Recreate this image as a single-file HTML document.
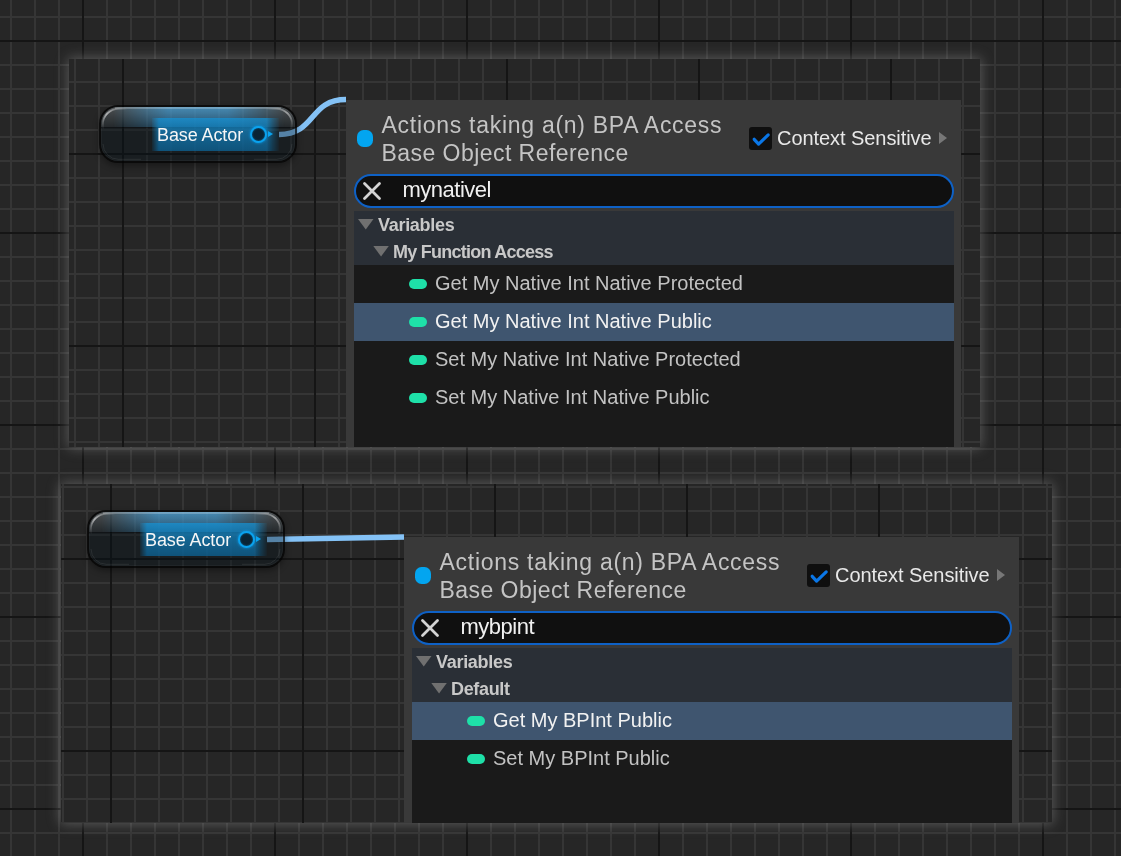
<!DOCTYPE html>
<html><head><meta charset="utf-8">
<style>
*{margin:0;padding:0;box-sizing:border-box}
html,body{width:1121px;height:856px;overflow:hidden}
.menu,.node .txt{will-change:transform}
body{position:relative;font-family:"Liberation Sans",sans-serif;
background-color:#262626;
background-image:
 linear-gradient(to right,#151515 0,#151515 2px,transparent 2px),
 linear-gradient(to bottom,#151515 0,#151515 2px,transparent 2px),
 linear-gradient(to right,#353535 0,#353535 2px,transparent 2px),
 linear-gradient(to bottom,#353535 0,#353535 2px,transparent 2px);
background-size:192px 100%,100% 192px,24px 100%,100% 24px;
background-position:82px 0,0 40px,10px 0,0 16px;
}
.panel{position:absolute;overflow:hidden;background-color:#262626;
box-shadow:0 0 12px 1px rgba(190,190,190,0.35);}
#p1{left:69px;top:59px;width:911px;height:388px;
background-image:
 linear-gradient(to right,#151515 0,#151515 2px,transparent 2px),
 linear-gradient(to bottom,#151515 0,#151515 2px,transparent 2px),
 linear-gradient(to right,#353535 0,#353535 2px,transparent 2px),
 linear-gradient(to bottom,#353535 0,#353535 2px,transparent 2px);
background-size:192px 100%,100% 192px,24px 100%,100% 24px;
background-position:53px 0,0 94px,5px 0,0 22px;}
#p2{left:61px;top:484px;width:991px;height:339px;
background-image:
 linear-gradient(to right,#151515 0,#151515 2px,transparent 2px),
 linear-gradient(to bottom,#151515 0,#151515 2px,transparent 2px),
 linear-gradient(to right,#353535 0,#353535 2px,transparent 2px),
 linear-gradient(to bottom,#353535 0,#353535 2px,transparent 2px);
background-size:192px 100%,100% 192px,24px 100%,100% 24px;
background-position:49px 0,0 74px,1px 0,0 2px;}
.abs{position:absolute}
/* node */
.node{position:absolute;width:198px;height:58px;border-radius:19px;overflow:hidden;
border:2px solid rgba(3,3,3,0.78);box-shadow:0 3px 6px rgba(0,0,0,0.35),inset 0 0 0 1px rgba(255,255,255,0.05)}
.node .body{position:absolute;left:0;top:0;right:0;bottom:0;background:rgba(2,16,24,0.36)}
.node .gloss{position:absolute;left:0;top:0;right:0;height:20px;
background:linear-gradient(to bottom,rgba(255,255,255,0.22),rgba(255,255,255,0.05))}
.node .glow{position:absolute;left:12px;top:0;width:172px;height:20px;
background:linear-gradient(to bottom,rgba(70,175,240,0.62),rgba(30,125,185,0.42));
-webkit-mask-image:linear-gradient(to right,transparent 0,#000 55px,#000 115px,transparent 172px)}
.node .hl{position:absolute;left:14px;right:14px;top:0;height:1.5px;background:rgba(255,255,255,0.22)}
.node .seam{position:absolute;left:0;right:0;top:19.5px;height:1.5px;background:rgba(0,0,0,0.3)}
.node .bar{position:absolute;left:51px;top:10.5px;width:127px;height:33.5px;
background:linear-gradient(to bottom,rgba(24,145,210,0.76),rgba(12,100,152,0.76));
-webkit-mask-image:linear-gradient(to right,rgba(0,0,0,0.15) 0,#000 7px,#000 114px,rgba(0,0,0,0.45) 121px,transparent 128px)}
.node .spec{position:absolute;left:0;top:0}
.node .txt{position:absolute;left:56px;top:18.5px;font-size:18px;line-height:18px;letter-spacing:-0.1px;color:#f6f6f6;white-space:nowrap}
.node .pin{position:absolute;left:149px;top:19px;width:17px;height:17px;border-radius:50%;
border:2.3px solid #0aa2ee;background:#0a2434;box-shadow:0 0 3px rgba(10,160,240,0.9),inset 0 0 2px rgba(10,160,240,0.6)}
.node .arr{position:absolute;left:167px;top:24px;width:0;height:0;border-left:5px solid #0aa4f0;
border-top:3.5px solid transparent;border-bottom:3.5px solid transparent}
/* menu */
.menu{position:absolute;background:#393939;width:615px}
.menu .dot{position:absolute;left:11px;top:30px;width:16px;height:17px;border-radius:6.5px;background:#03a5f0}
.menu .title{position:absolute;left:35.5px;top:10.8px;font-size:23px;line-height:28.3px;letter-spacing:0.6px;color:#c4c4c4;white-space:nowrap}
.menu .cb{position:absolute;left:403px;top:27px;width:23px;height:23px;border-radius:3px;background:#0f0f0f}
.menu .cs{position:absolute;left:431px;top:27px;font-size:20px;letter-spacing:-0.06px;color:#e8e8e8;white-space:nowrap}
.menu .carr{position:absolute;left:593px;top:32.3px;width:0;height:0;border-left:8px solid #777777;
border-top:6.5px solid transparent;border-bottom:6.5px solid transparent}
.menu .search{position:absolute;left:8px;top:74px;width:600px;height:34px;border-radius:17px;
background:#101010;border:2px solid #0e61c6}
.menu .search .q{position:absolute;left:46.5px;top:1.5px;font-size:22px;line-height:24px;letter-spacing:-0.5px;color:#f0f0f0}
.menu .list{position:absolute;left:8px;top:111px;width:600px;bottom:0;background:#1a1a1a}
.cat{position:relative;height:27px;background:#2a2f36;color:#c8c8c8;font-weight:bold;font-size:18px}
.cat .tri{position:absolute;top:8px;width:15.5px;height:10.5px;background:#707070;
clip-path:polygon(0 0,100% 0,50% 100%)}
.cat span{position:absolute;top:4px;white-space:nowrap}
.item{position:relative;height:38px;color:#c2c2c2;font-size:20px}
.item.sel{background:#3f556f;color:#f2f2f2}
.item .pill{position:absolute;left:55px;top:14px;width:18px;height:10px;border-radius:5px;background:#1ee0a8}
.item span{position:absolute;left:81px;top:6.5px;white-space:nowrap}
.wire{position:absolute;left:0;top:0}
</style></head><body>

<div id="p1" class="panel">
  <svg class="wire" width="911" height="388">
    <path d="M210 75.5 C 247 75.5, 240 40.5, 277 40.5" stroke="#84c2f6" stroke-width="5.5" fill="none"/>
  </svg>
  <div class="node" style="left:29.8px;top:46px">
    <div class="body"></div>
    <div class="gloss"></div>
    <div class="glow"></div>
    <div class="hl"></div>
    <div class="seam"></div>
    <div class="bar"></div>
    <svg class="spec" width="193" height="54">
      <defs>
        <linearGradient id="gl" x1="0" y1="1" x2="1" y2="0"><stop offset="0" stop-color="#fff" stop-opacity="0"/><stop offset="0.45" stop-color="#fff" stop-opacity="0.6"/><stop offset="1" stop-color="#fff" stop-opacity="0"/></linearGradient>
        <linearGradient id="gr" x1="0" y1="0" x2="1" y2="1"><stop offset="0" stop-color="#fff" stop-opacity="0"/><stop offset="0.5" stop-color="#fff" stop-opacity="0.5"/><stop offset="1" stop-color="#fff" stop-opacity="0"/></linearGradient>
      </defs>
      <path d="M1.8 22 L1.8 17.5 A15.7 15.7 0 0 1 17.5 1.8 L26 1.8" stroke="url(#gl)" stroke-width="1.8" fill="none"/>
      <path d="M165 1.8 L175.5 1.8 A15.7 15.7 0 0 1 191.2 17.5 L191.2 22" stroke="url(#gr)" stroke-width="1.8" fill="none"/>
      <path d="M2 37 A15.5 15.5 0 0 0 17.5 52.3 L40 52.3" stroke="rgba(255,255,255,0.08)" stroke-width="1" fill="none"/>
      <path d="M153 52.3 L175.5 52.3 A15.5 15.5 0 0 0 191 37" stroke="rgba(255,255,255,0.08)" stroke-width="1" fill="none"/>
    </svg>
    <div class="txt">Base Actor</div>
    <div class="pin"></div>
    <div class="arr"></div>
  </div>
  <div class="menu" style="left:277px;top:41px;height:347px">
    <div class="dot"></div>
    <div class="title"><div style="letter-spacing:0.72px">Actions taking a(n) BPA Access</div><div style="letter-spacing:0.45px">Base Object Reference</div></div>
    <div class="cb"><svg width="24" height="24"><path d="M5.2 12.3 L9.6 17.1 L19.2 7.9" stroke="#0a76e6" stroke-width="3.2" stroke-linecap="round" stroke-linejoin="round" fill="none"/></svg></div>
    <div class="cs">Context Sensitive</div>
    <div class="carr"></div>
    <div class="search">
      <svg class="abs" style="left:6px;top:5px" width="20" height="20"><path d="M2.5 2.5 L17.5 17.5 M17.5 2.5 L2.5 17.5" stroke="#d4d4d4" stroke-width="2.8" stroke-linecap="round"/></svg>
      <div class="q">mynativel</div>
    </div>
    <div class="list">
      <div class="cat"><div class="tri" style="left:4px"></div><span style="left:24px;letter-spacing:-0.3px">Variables</span></div>
      <div class="cat"><div class="tri" style="left:19.3px"></div><span style="left:39px;letter-spacing:-0.75px">My Function Access</span></div>
      <div class="item"><div class="pill"></div><span>Get My Native Int Native Protected</span></div>
      <div class="item sel"><div class="pill"></div><span>Get My Native Int Native Public</span></div>
      <div class="item"><div class="pill"></div><span>Set My Native Int Native Protected</span></div>
      <div class="item"><div class="pill"></div><span>Set My Native Int Native Public</span></div>
    </div>
  </div>
</div>

<div id="p2" class="panel">
  <svg class="wire" width="991" height="339">
    <path d="M206 55.5 L 343 53" stroke="#84c2f6" stroke-width="5.5" fill="none"/>
  </svg>
  <div class="node" style="left:25.7px;top:26px">
    <div class="body"></div>
    <div class="gloss"></div>
    <div class="glow"></div>
    <div class="hl"></div>
    <div class="seam"></div>
    <div class="bar"></div>
    <svg class="spec" width="193" height="54">
      <defs>
        <linearGradient id="gl" x1="0" y1="1" x2="1" y2="0"><stop offset="0" stop-color="#fff" stop-opacity="0"/><stop offset="0.45" stop-color="#fff" stop-opacity="0.6"/><stop offset="1" stop-color="#fff" stop-opacity="0"/></linearGradient>
        <linearGradient id="gr" x1="0" y1="0" x2="1" y2="1"><stop offset="0" stop-color="#fff" stop-opacity="0"/><stop offset="0.5" stop-color="#fff" stop-opacity="0.5"/><stop offset="1" stop-color="#fff" stop-opacity="0"/></linearGradient>
      </defs>
      <path d="M1.8 22 L1.8 17.5 A15.7 15.7 0 0 1 17.5 1.8 L26 1.8" stroke="url(#gl)" stroke-width="1.8" fill="none"/>
      <path d="M165 1.8 L175.5 1.8 A15.7 15.7 0 0 1 191.2 17.5 L191.2 22" stroke="url(#gr)" stroke-width="1.8" fill="none"/>
      <path d="M2 37 A15.5 15.5 0 0 0 17.5 52.3 L40 52.3" stroke="rgba(255,255,255,0.08)" stroke-width="1" fill="none"/>
      <path d="M153 52.3 L175.5 52.3 A15.5 15.5 0 0 0 191 37" stroke="rgba(255,255,255,0.08)" stroke-width="1" fill="none"/>
    </svg>
    <div class="txt">Base Actor</div>
    <div class="pin"></div>
    <div class="arr"></div>
  </div>
  <div class="menu" style="left:343px;top:53px;height:286px">
    <div class="dot"></div>
    <div class="title"><div style="letter-spacing:0.72px">Actions taking a(n) BPA Access</div><div style="letter-spacing:0.45px">Base Object Reference</div></div>
    <div class="cb"><svg width="24" height="24"><path d="M5.2 12.3 L9.6 17.1 L19.2 7.9" stroke="#0a76e6" stroke-width="3.2" stroke-linecap="round" stroke-linejoin="round" fill="none"/></svg></div>
    <div class="cs">Context Sensitive</div>
    <div class="carr"></div>
    <div class="search">
      <svg class="abs" style="left:6px;top:5px" width="20" height="20"><path d="M2.5 2.5 L17.5 17.5 M17.5 2.5 L2.5 17.5" stroke="#d4d4d4" stroke-width="2.8" stroke-linecap="round"/></svg>
      <div class="q">mybpint</div>
    </div>
    <div class="list">
      <div class="cat"><div class="tri" style="left:4px"></div><span style="left:24px;letter-spacing:-0.3px">Variables</span></div>
      <div class="cat"><div class="tri" style="left:19.3px"></div><span style="left:39px;letter-spacing:-0.33px">Default</span></div>
      <div class="item sel"><div class="pill"></div><span>Get My BPInt Public</span></div>
      <div class="item"><div class="pill"></div><span>Set My BPInt Public</span></div>
    </div>
  </div>
</div>

</body></html>
